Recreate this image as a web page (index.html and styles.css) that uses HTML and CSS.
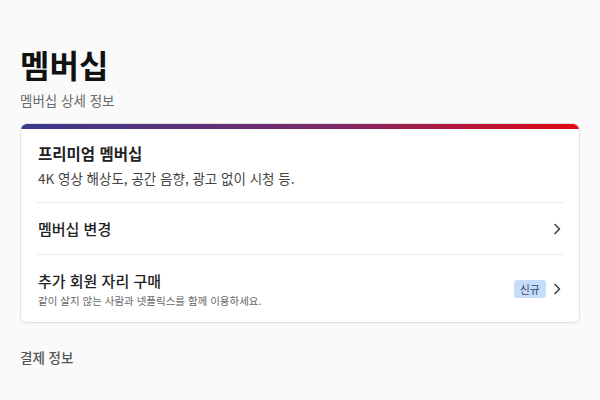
FILE: index.html
```html
<!DOCTYPE html>
<html lang="ko">
<head>
    <meta charset="UTF-8">
    <title>멤버십</title>
    <link rel="stylesheet" href="styles.css">
</head>
<body>
    <h1 class="page-title">멤버십</h1>
    <p class="page-sub">멤버십 상세 정보</p>

    <div class="card">
        <div class="card-bar"></div>
        <div class="card-body">
            <div class="row plan">
                <div class="row-title">프리미엄 멤버십</div>
                <div class="row-desc">4K 영상 해상도, 공간 음향, 광고 없이 시청 등.</div>
            </div>
            <div class="row link">
                <div class="row-text">
                    <div class="row-title">멤버십 변경</div>
                </div>
                <span class="chevron">
                    <svg width="10" height="14" viewBox="0 0 10 14"><path d="M3 2.5 L7.5 7 L3 11.5" fill="none" stroke="#444" stroke-width="1.6" stroke-linecap="round" stroke-linejoin="round"/></svg>
                </span>
            </div>
            <div class="row link">
                <div class="row-text">
                    <div class="row-title">추가 회원 자리 구매</div>
                    <div class="row-note">같이 살지 않는 사람과 넷플릭스를 함께 이용하세요.</div>
                </div>
                <span class="badge">신규</span>
                <span class="chevron">
                    <svg width="10" height="14" viewBox="0 0 10 14"><path d="M3 2.5 L7.5 7 L3 11.5" fill="none" stroke="#444" stroke-width="1.6" stroke-linecap="round" stroke-linejoin="round"/></svg>
                </span>
            </div>
        </div>
    </div>

    <h3 class="section-title">결제 정보</h3>
</body>
</html>
```

FILE: styles.css
```css
body {
    font-family: "Noto Sans CJK KR", "Noto Sans", sans-serif;
    background-color: #fafafa;
    color: #222;
    margin: 0;
    padding: 41px 20px 0;
}
.page-title {
    font-size: 32px;
    font-weight: 700;
    color: #111;
    margin: 0;
    line-height: 46px;
}
.page-sub {
    font-size: 13.5px;
    color: #6b6b6b;
    margin: 3px 0 13px;
    line-height: 20px;
}
.card {
    background-color: #ffffff;
    border: 1px solid #e2e2e2;
    border-radius: 7px;
    overflow: hidden;
    box-shadow: 0 1px 2px rgba(0, 0, 0, 0.04);
}
.card-bar {
    height: 5px;
    background: linear-gradient(90deg, #3b3a8c 0%, #7b2a6a 55%, #e50914 100%);
}
.card-body {
    padding: 0 15px;
}
.row {
    border-bottom: 1px solid #ececec;
}
.row:last-child {
    border-bottom: none;
}
.plan {
    padding: 13px 2px 14px;
}
.row-title {
    font-size: 15px;
    font-weight: 500;
    color: #222;
    line-height: 22px;
}
.plan .row-title {
    font-size: 15.5px;
    font-weight: 700;
}
.row-desc {
    font-size: 13.5px;
    color: #444;
    line-height: 20px;
    margin-top: 4px;
}
.link {
    display: flex;
    align-items: center;
    padding: 0 2px;
    min-height: 51px;
}
.link:last-child {
    padding: 8px 2px 8px;
}
.row-text {
    flex: 1;
}
.row-note {
    font-size: 10.5px;
    color: #666;
    line-height: 15px;
    margin-top: 1px;
}
.badge {
    background-color: #c5ddfb;
    color: #3a4a66;
    font-size: 11px;
    border-radius: 3px;
    padding: 1px 6px;
    margin-right: 6px;
    line-height: 16px;
}
.chevron {
    display: flex;
    align-items: center;
}
.section-title {
    font-size: 13.5px;
    font-weight: 500;
    color: #555;
    margin: 24px 0 0;
}
```
